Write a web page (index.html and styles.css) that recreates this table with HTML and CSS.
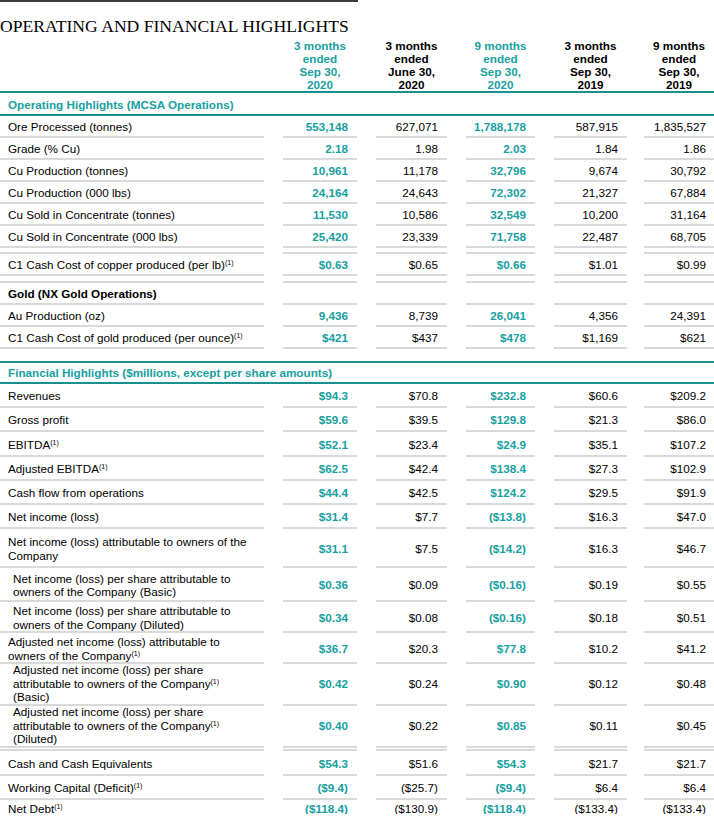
FILE: index.html
```html
<!DOCTYPE html>
<html lang="en">
<head>
<meta charset="utf-8">
<title>Operating and Financial Highlights</title>
<link rel="stylesheet" href="styles.css">
</head>
<body>
<div class="topline"></div>
<h1 class="title">OPERATING AND FINANCIAL HIGHLIGHTS</h1>
<div class="table">
  <div class="row head">
    <div class="hcell"></div>
    <div class="hcell hv em">3 months<br>ended<br>Sep 30,<br>2020</div>
    <div class="hcell hv">3 months<br>ended<br>June 30,<br>2020</div>
    <div class="hcell hv em">9 months<br>ended<br>Sep 30,<br>2020</div>
    <div class="hcell hv">3 months<br>ended<br>Sep 30,<br>2019</div>
    <div class="hcell hv">9 months<br>ended<br>Sep 30,<br>2019</div>
  </div>
  <div class="section first"><span>Operating Highlights (MCSA Operations)</span></div>

  <div class="row h22">
    <div class="cell label"><span>Ore Processed (tonnes)</span></div>
    <div class="cell v em">553,148</div><div class="cell v">627,071</div><div class="cell v em">1,788,178</div><div class="cell v">587,915</div><div class="cell v">1,835,527</div>
  </div>
  <div class="row h22">
    <div class="cell label"><span>Grade (% Cu)</span></div>
    <div class="cell v em">2.18</div><div class="cell v">1.98</div><div class="cell v em">2.03</div><div class="cell v">1.84</div><div class="cell v">1.86</div>
  </div>
  <div class="row h22">
    <div class="cell label"><span>Cu Production (tonnes)</span></div>
    <div class="cell v em">10,961</div><div class="cell v">11,178</div><div class="cell v em">32,796</div><div class="cell v">9,674</div><div class="cell v">30,792</div>
  </div>
  <div class="row h22">
    <div class="cell label"><span>Cu Production (000 lbs)</span></div>
    <div class="cell v em">24,164</div><div class="cell v">24,643</div><div class="cell v em">72,302</div><div class="cell v">21,327</div><div class="cell v">67,884</div>
  </div>
  <div class="row h22">
    <div class="cell label"><span>Cu Sold in Concentrate (tonnes)</span></div>
    <div class="cell v em">11,530</div><div class="cell v">10,586</div><div class="cell v em">32,549</div><div class="cell v">10,200</div><div class="cell v">31,164</div>
  </div>
  <div class="row h22">
    <div class="cell label"><span>Cu Sold in Concentrate (000 lbs)</span></div>
    <div class="cell v em">25,420</div><div class="cell v">23,339</div><div class="cell v em">71,758</div><div class="cell v">22,487</div><div class="cell v">68,705</div>
  </div>
  <div class="row h6">
    <div class="cell label"></div><div class="cell v"></div><div class="cell v"></div><div class="cell v"></div><div class="cell v"></div><div class="cell v"></div>
  </div>
  <div class="row h22">
    <div class="cell label"><span>C1 Cash Cost of copper produced (per lb)<sup class="fn">(1)</sup></span></div>
    <div class="cell v em">$0.63</div><div class="cell v">$0.65</div><div class="cell v em">$0.66</div><div class="cell v">$1.01</div><div class="cell v">$0.99</div>
  </div>
  <div class="row h7">
    <div class="cell label"></div><div class="cell v"></div><div class="cell v"></div><div class="cell v"></div><div class="cell v"></div><div class="cell v"></div>
  </div>
  <div class="row h22">
    <div class="cell label strong"><span>Gold (NX Gold Operations)</span></div>
    <div class="cell v"></div><div class="cell v"></div><div class="cell v"></div><div class="cell v"></div><div class="cell v"></div>
  </div>
  <div class="row h22">
    <div class="cell label"><span>Au Production (oz)</span></div>
    <div class="cell v em">9,436</div><div class="cell v">8,739</div><div class="cell v em">26,041</div><div class="cell v">4,356</div><div class="cell v">24,391</div>
  </div>
  <div class="row h22">
    <div class="cell label"><span>C1 Cash Cost of gold produced (per ounce)<sup class="fn">(1)</sup></span></div>
    <div class="cell v em">$421</div><div class="cell v">$437</div><div class="cell v em">$478</div><div class="cell v">$1,169</div><div class="cell v">$621</div>
  </div>

  <div class="section second"><span>Financial Highlights ($millions, except per share amounts)</span></div>

  <div class="row h24">
    <div class="cell label"><span>Revenues</span></div>
    <div class="cell v em">$94.3</div><div class="cell v">$70.8</div><div class="cell v em">$232.8</div><div class="cell v">$60.6</div><div class="cell v">$209.2</div>
  </div>
  <div class="row h24">
    <div class="cell label"><span>Gross profit</span></div>
    <div class="cell v em">$59.6</div><div class="cell v">$39.5</div><div class="cell v em">$129.8</div><div class="cell v">$21.3</div><div class="cell v">$86.0</div>
  </div>
  <div class="row h25">
    <div class="cell label"><span>EBITDA<sup class="fn">(1)</sup></span></div>
    <div class="cell v em">$52.1</div><div class="cell v">$23.4</div><div class="cell v em">$24.9</div><div class="cell v">$35.1</div><div class="cell v">$107.2</div>
  </div>
  <div class="row h24">
    <div class="cell label"><span>Adjusted EBITDA<sup class="fn">(1)</sup></span></div>
    <div class="cell v em">$62.5</div><div class="cell v">$42.4</div><div class="cell v em">$138.4</div><div class="cell v">$27.3</div><div class="cell v">$102.9</div>
  </div>
  <div class="row h24">
    <div class="cell label"><span>Cash flow from operations</span></div>
    <div class="cell v em">$44.4</div><div class="cell v">$42.5</div><div class="cell v em">$124.2</div><div class="cell v">$29.5</div><div class="cell v">$91.9</div>
  </div>
  <div class="row h24">
    <div class="cell label"><span>Net income (loss)</span></div>
    <div class="cell v em">$31.4</div><div class="cell v">$7.7</div><div class="cell v em">($13.8)</div><div class="cell v">$16.3</div><div class="cell v">$47.0</div>
  </div>
  <div class="row h39">
    <div class="cell label"><span>Net income (loss) attributable to owners of the<br>Company</span></div>
    <div class="cell v em">$31.1</div><div class="cell v">$7.5</div><div class="cell v em">($14.2)</div><div class="cell v">$16.3</div><div class="cell v">$46.7</div>
  </div>
  <div class="row h34">
    <div class="cell label ind"><span>Net income (loss) per share attributable to<br>owners of the Company (Basic)</span></div>
    <div class="cell v em">$0.36</div><div class="cell v">$0.09</div><div class="cell v em">($0.16)</div><div class="cell v">$0.19</div><div class="cell v">$0.55</div>
  </div>
  <div class="row h31">
    <div class="cell label ind"><span>Net income (loss) per share attributable to<br>owners of the Company (Diluted)</span></div>
    <div class="cell v em">$0.34</div><div class="cell v">$0.08</div><div class="cell v em">($0.16)</div><div class="cell v">$0.18</div><div class="cell v">$0.51</div>
  </div>
  <div class="row h28">
    <div class="cell label"><span>Adjusted net income (loss) attributable to<br>owners of the Company<sup class="fn">(1)</sup></span></div>
    <div class="cell v em">$36.7</div><div class="cell v">$20.3</div><div class="cell v em">$77.8</div><div class="cell v">$10.2</div><div class="cell v">$41.2</div>
  </div>
  <div class="row h42">
    <div class="cell label ind"><span>Adjusted net income (loss) per share<br>attributable to owners of the Company<sup class="fn">(1)</sup><br>(Basic)</span></div>
    <div class="cell v em">$0.42</div><div class="cell v">$0.24</div><div class="cell v em">$0.90</div><div class="cell v">$0.12</div><div class="cell v">$0.48</div>
  </div>
  <div class="row h40">
    <div class="cell label ind"><span>Adjusted net income (loss) per share<br>attributable to owners of the Company<sup class="fn">(1)</sup><br>(Diluted)</span></div>
    <div class="cell v em">$0.40</div><div class="cell v">$0.22</div><div class="cell v em">$0.85</div><div class="cell v">$0.11</div><div class="cell v">$0.45</div>
  </div>
  <div class="row h8">
    <div class="cell label"></div><div class="cell v"></div><div class="cell v"></div><div class="cell v"></div><div class="cell v"></div><div class="cell v"></div>
  </div>
  <div class="row h25">
    <div class="cell label"><span>Cash and Cash Equivalents</span></div>
    <div class="cell v em">$54.3</div><div class="cell v">$51.6</div><div class="cell v em">$54.3</div><div class="cell v">$21.7</div><div class="cell v">$21.7</div>
  </div>
  <div class="row h24">
    <div class="cell label"><span>Working Capital (Deficit)<sup class="fn">(1)</sup></span></div>
    <div class="cell v em">($9.4)</div><div class="cell v">($25.7)</div><div class="cell v em">($9.4)</div><div class="cell v">$6.4</div><div class="cell v">$6.4</div>
  </div>
  <div class="row h14">
    <div class="cell label"><span>Net Debt<sup class="fn">(1)</sup></span></div>
    <div class="cell v em">($118.4)</div><div class="cell v">($130.9)</div><div class="cell v em">($118.4)</div><div class="cell v">($133.4)</div><div class="cell v">($133.4)</div>
  </div>
</div>
</body>
</html>
```

FILE: styles.css
```css
html, body {
  margin: 0;
  padding: 0;
  background: #ffffff;
}

body {
  width: 714px;
  font-family: "Liberation Sans", Arial, sans-serif;
  font-size: 11.7px;
  color: #000000;
  overflow: hidden;
}

.topline {
  width: 358px;
  height: 2px;
  background: #3c3c3c;
}

.title {
  margin: 14px 0 0 0;
  height: 20px;
  font-family: "Liberation Serif", "Times New Roman", serif;
  font-weight: normal;
  font-size: 17.6px;
  line-height: 20px;
  white-space: nowrap;
  color: #000000;
}

.table {
  width: 714px;
}

.row {
  display: grid;
  grid-template-columns: 264px 93px 90px 88px 92px 87px;
  box-sizing: border-box;
}

.head {
  height: 57px;
  border-bottom: 2px solid #17908f;
  align-items: end;
}

.hcell {
  font-weight: bold;
  line-height: 13px;
  text-align: center;
}

.hv {
  margin-left: 19px;
}

.head .hv:last-child {
  margin-left: 17px;
}

.section {
  box-sizing: border-box;
  height: 23px;
  padding: 2px 0 0 8px;
  display: flex;
  align-items: center;
  border-bottom: 2px solid #17908f;
  color: #17a0a0;
  font-weight: bold;
  white-space: nowrap;
}

.section.second {
  margin-top: 12px;
  border-top: 2px solid #17908f;
  padding-top: 0;
}

.cell {
  box-sizing: border-box;
  display: flex;
  align-items: center;
  padding-top: 2px;
  border-bottom: 2px solid #d9d9d9;
  line-height: 13.5px;
  white-space: nowrap;
}

.label {
  padding-left: 8px;
}

.label.ind {
  padding-left: 13px;
}

.label.strong {
  font-weight: bold;
}

.v {
  margin-left: 19px;
  justify-content: flex-end;
  padding-right: 9px;
}

.row .v:last-child {
  margin-left: 17px;
  padding-right: 8px;
}

.em {
  color: #17a0a0;
  font-weight: bold;
}

.fn {
  font-size: 7px;
  line-height: 0;
  vertical-align: 4px;
}

.h6 { height: 6px; }
.h7 { height: 7px; }
.h8 { height: 8px; }
.h14 { height: 14px; }
.h22 { height: 22px; }
.h24 { height: 24px; }
.h25 { height: 25px; }
.h28 { height: 28px; }
.h31 { height: 31px; }
.h34 { height: 34px; }
.h39 { height: 39px; }
.h40 { height: 40px; }
.h42 { height: 42px; }

.h6 .cell, .h7 .cell, .h8 .cell {
  padding-top: 0;
}
```
